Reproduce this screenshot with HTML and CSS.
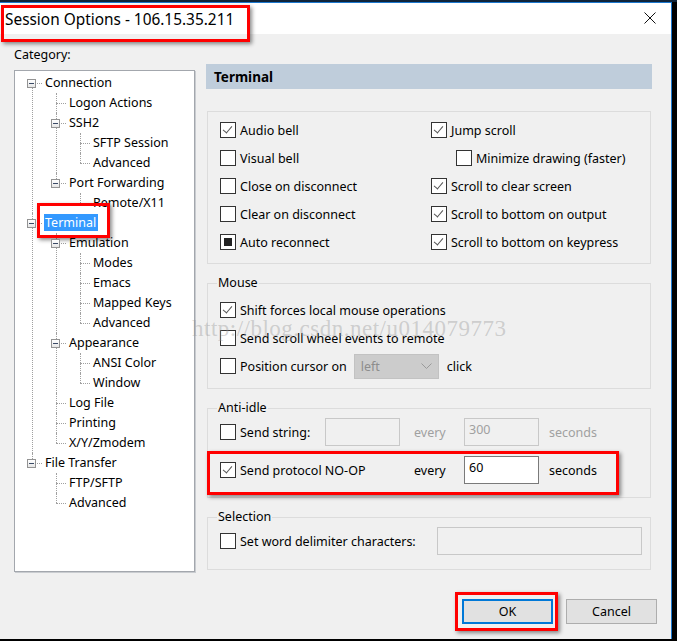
FILE: index.html
```html
<!DOCTYPE html>
<html lang="en">
<head>
    <meta charset="UTF-8">
    <title>Session Options</title>
    <link rel="stylesheet" href="styles.css">
</head>
<body>
    <div class="screen">
        <div class="strip"></div>
        <div class="window">
            <div class="titlebar">
                <span class="title">Session Options - 106.15.35.211</span>
                <svg class="close" width="12" height="12" viewBox="0 0 12 12">
                    <path d="M0.5,0.5 L11.5,11.5 M11.5,0.5 L0.5,11.5" stroke="#111" stroke-width="1" fill="none" />
                </svg>
            </div>

            <div class="content">
                <div class="main">
                    <div class="left">
                        <div class="cat-label">Category:</div>
                        <div class="tree">
                            <ul>
                                <li><span class="exp"></span>Connection
                                    <ul>
                                        <li>Logon Actions</li>
                                        <li><span class="exp"></span>SSH2
                                            <ul>
                                                <li>SFTP Session</li>
                                                <li>Advanced</li>
                                            </ul>
                                        </li>
                                        <li><span class="exp"></span>Port Forwarding
                                            <ul>
                                                <li>Remote/X11</li>
                                            </ul>
                                        </li>
                                    </ul>
                                </li>
                                <li><span class="exp"></span><span class="selected">Terminal</span>
                                    <ul>
                                        <li><span class="exp"></span>Emulation
                                            <ul>
                                                <li>Modes</li>
                                                <li>Emacs</li>
                                                <li>Mapped Keys</li>
                                                <li>Advanced</li>
                                            </ul>
                                        </li>
                                        <li><span class="exp"></span>Appearance
                                            <ul>
                                                <li>ANSI Color</li>
                                                <li>Window</li>
                                            </ul>
                                        </li>
                                        <li>Log File</li>
                                        <li>Printing</li>
                                        <li>X/Y/Zmodem</li>
                                    </ul>
                                </li>
                                <li><span class="exp"></span>File Transfer
                                    <ul>
                                        <li>FTP/SFTP</li>
                                        <li>Advanced</li>
                                    </ul>
                                </li>
                            </ul>
                        </div>
                    </div>

                    <div class="right">
                        <div class="page-header">Terminal</div>

                        <div class="group plain">
                            <div class="opt-grid">
                                <label class="opt"><span class="cb checked"></span>Audio bell</label>
                                <label class="opt"><span class="cb checked"></span>Jump scroll</label>
                                <label class="opt"><span class="cb"></span>Visual bell</label>
                                <label class="opt indent"><span class="cb"></span>Minimize drawing (faster)</label>
                                <label class="opt"><span class="cb"></span>Close on disconnect</label>
                                <label class="opt"><span class="cb checked"></span>Scroll to clear screen</label>
                                <label class="opt"><span class="cb"></span>Clear on disconnect</label>
                                <label class="opt"><span class="cb checked"></span>Scroll to bottom on output</label>
                                <label class="opt"><span class="cb mixed"></span>Auto reconnect</label>
                                <label class="opt"><span class="cb checked"></span>Scroll to bottom on keypress</label>
                            </div>
                        </div>

                        <fieldset class="group mouse">
                            <legend>Mouse</legend>
                            <label class="opt"><span class="cb checked"></span>Shift forces local mouse operations</label>
                            <label class="opt"><span class="cb"></span>Send scroll wheel events to remote</label>
                            <div class="opt">
                                <span class="cb"></span>Position cursor on
                                <span class="select">left
                                    <svg width="11" height="6" viewBox="0 0 11 6"><path d="M0.5,0.5 L5.5,5.5 L10.5,0.5" stroke="#9a9a9a" fill="none" /></svg>
                                </span>
                                <span class="after">click</span>
                            </div>
                        </fieldset>

                        <fieldset class="group idle">
                            <legend>Anti-idle</legend>
                            <div class="idle-row">
                                <span class="opt first"><span class="cb"></span>Send string:</span>
                                <span class="field small disabled"></span>
                                <span class="every muted">every</span>
                                <span class="field disabled">300</span>
                                <span class="secs muted">seconds</span>
                            </div>
                            <div class="idle-row">
                                <span class="opt first"><span class="cb checked"></span>Send protocol NO-OP</span>
                                <span class="spacer"></span>
                                <span class="every">every</span>
                                <span class="field active">60</span>
                                <span class="secs">seconds</span>
                            </div>
                        </fieldset>

                        <fieldset class="group selection">
                            <legend>Selection</legend>
                            <div class="sel-row">
                                <span class="opt"><span class="cb"></span>Set word delimiter characters:</span>
                                <span class="field wide disabled"></span>
                            </div>
                        </fieldset>
                    </div>
                </div>

                <div class="footer">
                    <button class="btn default">OK</button>
                    <button class="btn">Cancel</button>
                </div>
            </div>
        </div>

        <div class="watermark">http://blog.csdn.net/u014079773</div>

        <!-- red annotation frames drawn on the screenshot -->
        <div class="mark mark-title"></div>
        <div class="mark mark-terminal"></div>
        <div class="mark mark-noop"></div>
        <div class="mark mark-ok"></div>
    </div>
</body>
</html>
```

FILE: styles.css
```css
html, body {
    margin: 0;
    padding: 0;
}
body {
    background-color: #000;
    font-family: 'Noto Sans', 'Liberation Sans', sans-serif;
    font-size: 12.5px;
    color: #000;
}
.screen {
    position: relative;
    width: 677px;
    height: 641px;
    overflow: hidden;
}
.strip {
    height: 2px;
    background-color: #10243a;
}
.window {
    width: 671px;
    height: 636px;
    border-top: 1px solid #1c78cf;
    border-right: 1px solid #1c78cf;
    background-color: #f0f0f0;
    display: flex;
    flex-direction: column;
}
.titlebar {
    height: 31px;
    background-color: #fff;
    display: flex;
    align-items: center;
    justify-content: space-between;
    padding: 0 15px 0 5px;
}
.title {
    font-size: 15.4px;
    padding-top: 1px;
}
.close {
    display: block;
    margin-top: -2px;
}
.content {
    flex: 1;
    display: flex;
    flex-direction: column;
}
.main {
    display: flex;
}
.left {
    width: 180px;
    padding-left: 14px;
}
.cat-label {
    margin-top: 12px;
    line-height: 18px;
}
.tree {
    margin-top: 6px;
    width: 179px;
    height: 500px;
    border: 1px solid #a3a7ad;
    background-color: #fff;
    box-shadow: 1px 1px 0 #c9ccd0;
}
.tree ul {
    list-style: none;
    margin: 0;
    padding: 0;
}
.tree > ul {
    padding: 2px 0 0 17px;
}
.tree ul ul {
    margin-left: 11px;
}
.tree li {
    position: relative;
    padding-left: 13px;
    line-height: 20px;
    white-space: nowrap;
}
.tree li::before {
    content: '';
    position: absolute;
    left: 0;
    top: 10px;
    width: 10px;
    border-top: 1px dotted #a0a0a0;
}
.tree li::after {
    content: '';
    position: absolute;
    left: 0;
    top: 0;
    bottom: 0;
    border-left: 1px dotted #a0a0a0;
}
.tree li:last-child::after {
    bottom: auto;
    height: 10px;
}
.tree > ul > li:first-child::after {
    top: 10px;
}
.exp {
    position: absolute;
    left: -5px;
    top: 6px;
    width: 9px;
    height: 9px;
    box-sizing: border-box;
    border: 1px solid #939393;
    background: linear-gradient(#fff, #e6e6e6);
    z-index: 1;
}
.exp::after {
    content: '';
    position: absolute;
    left: 1px;
    top: 3px;
    width: 5px;
    height: 1px;
    background-color: #3a4a66;
}
.selected {
    background-color: #3399ff;
    color: #fff;
    padding: 0 2px 0 1px;
    margin-left: -1px;
}

.right {
    margin-left: 12px;
    width: 446px;
}
.page-header {
    margin-top: 30px;
    height: 25px;
    line-height: 26px;
    background-color: #bfcddb;
    padding-left: 8px;
    font-weight: bold;
    font-size: 13.5px;
}
.group {
    margin: 0 0 0 1px;
    width: 444px;
    box-sizing: border-box;
    border: 1px solid #dcdcdc;
}
.group.plain {
    margin-top: 22px;
    height: 153px;
    padding: 4px 0 0 12px;
}
fieldset.group {
    min-width: 0;
    padding: 0 0 0 12px;
    margin-top: 10px;
}
fieldset.group legend {
    padding: 0 1px;
    margin-left: -3px;
    line-height: 18px;
}
.opt-grid {
    display: grid;
    grid-template-columns: 211px 1fr;
}
.opt {
    display: flex;
    align-items: center;
    height: 28px;
    white-space: nowrap;
}
.opt.indent {
    padding-left: 25px;
}
.cb {
    position: relative;
    width: 16px;
    height: 16px;
    box-sizing: border-box;
    border: 1px solid #333;
    background-color: #fff;
    margin-right: 4px;
    flex-shrink: 0;
}
.cb.checked::after {
    content: '';
    position: absolute;
    left: 4px;
    top: 1px;
    width: 4px;
    height: 8px;
    border-right: 1.5px solid #555;
    border-bottom: 1.5px solid #555;
    transform: rotate(40deg);
}
.cb.mixed::after {
    content: '';
    position: absolute;
    left: 3px;
    top: 3px;
    width: 8px;
    height: 8px;
    background-color: #222;
}
.mouse {
    height: 115px;
    padding-top: 4px !important;
}
.select {
    display: inline-flex;
    align-items: center;
    justify-content: space-between;
    box-sizing: border-box;
    width: 85px;
    height: 25px;
    margin-left: 7px;
    padding: 0 6px;
    background-color: #cccccc;
    border: 1px solid #c2c2c2;
    color: #8d8d8d;
}
.after {
    margin-left: 8px;
}
.idle {
    height: 99px;
}
.idle-row {
    display: flex;
    align-items: center;
    height: 30px;
}
.idle-row + .idle-row {
    margin-top: 8px;
}
.idle-row .first {
    width: 105px;
}
.field {
    box-sizing: border-box;
    height: 28px;
    width: 75px;
    padding: 2px 4px;
    line-height: 18px;
    border: 1px solid #c8c8c8;
    background-color: #f0f0f0;
}
.field.disabled {
    color: #a0a0a0;
}
.field.active {
    background-color: #fff;
    border-color: #7a7a7a;
}
.spacer {
    width: 75px;
}
.every {
    width: 50px;
    padding-left: 14px;
}
.secs {
    margin-left: 10px;
}
.muted {
    color: #a0a0a0;
}
.selection {
    height: 62px;
}
.sel-row {
    display: flex;
    align-items: center;
    height: 30px;
}
.field.wide {
    margin-left: auto;
    margin-right: 8px;
    width: 205px;
}

.footer {
    display: flex;
    justify-content: flex-end;
    gap: 13px;
    margin-top: 27px;
    padding-right: 14px;
}
.btn {
    width: 91px;
    height: 25px;
    font-family: inherit;
    font-size: 12.5px;
    background-color: #e1e1e1;
    border: 1px solid #adadad;
    padding: 0;
}
.btn.default {
    border-color: #0078d7;
    box-shadow: inset 0 0 0 1px #0078d7;
}

.watermark {
    position: absolute;
    left: 192px;
    top: 316px;
    font-family: 'Liberation Serif', serif;
    font-size: 23px;
    letter-spacing: 0.5px;
    color: rgba(150, 150, 150, 0.4);
    pointer-events: none;
}
.mark {
    position: absolute;
    border: 3px solid #ff0000;
    box-shadow: 2px 2px 4px rgba(0, 0, 0, 0.45);
}
.mark-title {
    left: 1px;
    top: 5px;
    width: 243px;
    height: 31px;
}
.mark-terminal {
    left: 37px;
    top: 203px;
    width: 67px;
    height: 29px;
}
.mark-noop {
    left: 207px;
    top: 451px;
    width: 406px;
    height: 38px;
}
.mark-ok {
    left: 455px;
    top: 592px;
    width: 97px;
    height: 33px;
}
```
